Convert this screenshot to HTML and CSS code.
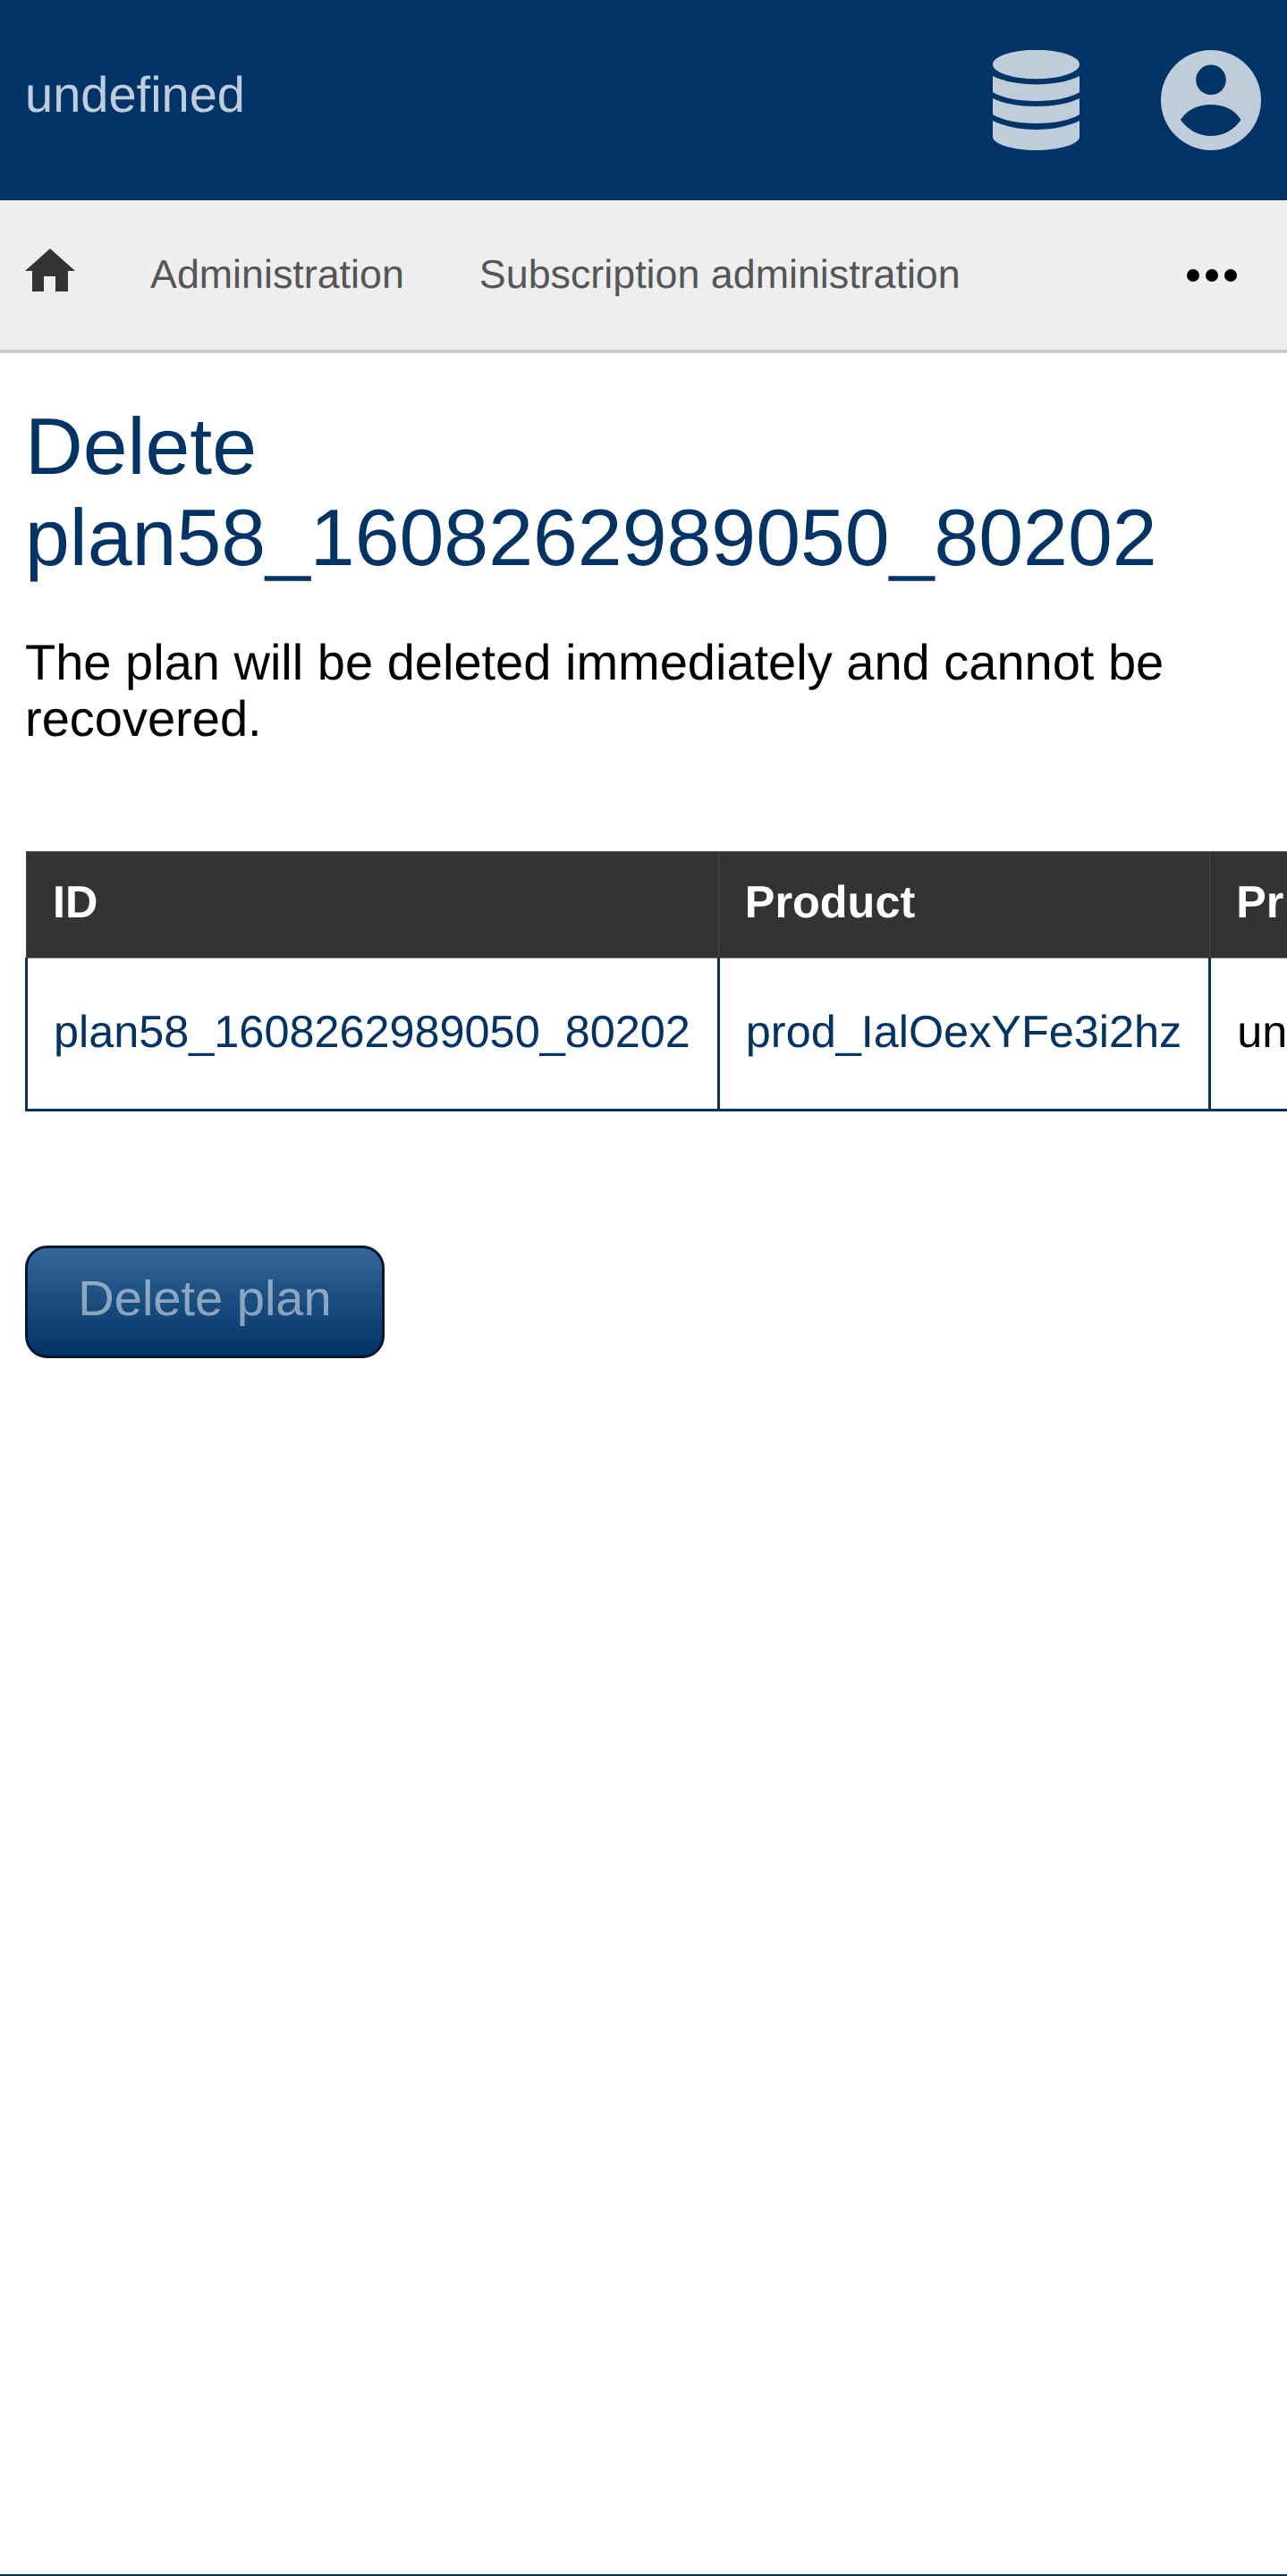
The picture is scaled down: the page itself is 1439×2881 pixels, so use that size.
FILE: index.html
```html
<!DOCTYPE html>
<html lang="en">
<head>
<meta charset="utf-8">
<title>Delete plan</title>
<link rel="stylesheet" href="styles.css">
</head>
<body>
<header class="topbar">
  <span class="brand">undefined</span>
  <div class="top-icons">
    <svg class="icon-db" viewBox="0 0 97 112" width="97" height="112" aria-hidden="true">
      <ellipse cx="48.5" cy="16" rx="48.5" ry="16.3"/>
      <path d="M0 29C12 35 30 38.500 48.500 38.500S85 35 97 29V47C88 53 70 57 48.500 57S9 53 0 47Z"/>
      <path d="M0 54C12 60 30 63 48.500 63S85 60 97 54V72C88 78 70 82 48.500 82S9 78 0 72Z"/>
      <path d="M0 79C12 85 30 89 48.500 89S85 85 97 79V97C97 105 75 112 48.500 112S0 105 0 97Z"/>
    </svg>
    <svg class="icon-user" viewBox="0 0 112 112" width="112" height="112" aria-hidden="true">
      <path fill-rule="evenodd" d="M56 0a56 56 0 1 0 0 112a56 56 0 1 0 0-112ZM56 16.500a16.800 16.800 0 1 1 0 33.600a16.800 16.800 0 1 1 0-33.600ZM22 78C30 66 42 61 56 61S82 66 89.500 78C82 89 70 96 56 96S30 89 22 78Z"/>
    </svg>
  </div>
</header>
<nav class="navbar">
  <svg class="icon-home" viewBox="0 0 56 48" width="56" height="48" aria-hidden="true">
    <path d="M28 0L56 25H48V48H34V31H21V48H8V25H0Z"/>
  </svg>
  <a class="nav-link" href="#">Administration</a>
  <a class="nav-link" href="#">Subscription administration</a>
  <svg class="icon-more" viewBox="0 0 56 14" width="56" height="14" aria-hidden="true">
    <circle cx="7" cy="7" r="7"/><circle cx="28" cy="7" r="7"/><circle cx="49" cy="7" r="7"/>
  </svg>
</nav>
<main class="content">
  <h1 class="title">Delete plan58_1608262989050_80202</h1>
  <p class="lead">The plan will be deleted immediately and cannot be recovered.</p>
  <div class="table-wrap">
    <table class="plans">
      <thead>
        <tr><th>ID</th><th>Product</th><th>Price</th></tr>
      </thead>
      <tbody>
        <tr>
          <td><a href="#">plan58_1608262989050_80202</a></td>
          <td><a href="#">prod_IalOexYFe3i2hz</a></td>
          <td>undefined</td>
        </tr>
      </tbody>
    </table>
  </div>
  <button class="btn" type="button">Delete plan</button>
</main>
<footer class="footer"></footer>
</body>
</html>
```
FILE: styles.css
```css
* { box-sizing: border-box; }
html, body { margin: 0; padding: 0; }
body {
  width: 1439px;
  height: 2881px;
  overflow: hidden;
  display: flex;
  flex-direction: column;
  background: #fff;
  color: #000;
  font-family: "Liberation Sans", Arial, sans-serif;
  font-size: 44.8px;
  text-rendering: geometricPrecision;
}
.topbar {
  height: 224px;
  flex: none;
  background: #003366;
  display: flex;
  align-items: center;
  justify-content: space-between;
  padding: 0 29px 0 28px;
}
.brand { font-size: 56px; color: #bfccd9; position: relative; top: -7px; }
.top-icons { display: flex; align-items: center; gap: 91px; }
.top-icons svg { display: block; fill: #bfccd9; }
.navbar {
  height: 171px;
  flex: none;
  background: #eeeeee;
  border-bottom: 4px solid #cccccc;
  display: flex;
  align-items: center;
  padding: 0 56px 0 28px;
}
.icon-home { fill: #333; flex: none; margin: -12px 84px 0 0; }
.nav-link { color: #555; text-decoration: none; margin-right: 84px; }
.icon-more { fill: #000; margin-left: auto; flex: none; }
.content { flex: 1; padding: 53px 0 0 28px; }
.title {
  margin: 0 29px 0 0;
  color: #003366;
  font-size: 89.6px;
  font-weight: 400;
  line-height: 102px;
}
.lead {
  margin: 57px 29px 0 0;
  font-size: 56px;
  line-height: 63px;
}
.table-wrap { margin-top: 117px; overflow: hidden; }
.plans { border-collapse: collapse; font-size: 50.4px; white-space: nowrap; }
.plans th {
  background: #333;
  color: #fff;
  text-align: left;
  font-weight: 700;
  height: 119px;
  padding: 0 30px 7px 29px;
  border: 1px solid #444;
  border-bottom-color: #888;
}
.plans td {
  height: 170px;
  padding: 0 30px 6px 29px;
  border: 3px solid #003366;
  border-top: 0;
}
.plans a { color: #003366; text-decoration: none; }
.btn {
  display: block;
  margin-top: 150px;
  width: 402px;
  height: 126px;
  border: 3px solid #00152f;
  border-radius: 25px;
  background: linear-gradient(#336699, #003366);
  color: rgba(255, 255, 255, 0.5);
  font: inherit;
  font-size: 56px;
  padding: 0 0 10px;
}
.footer { height: 2px; flex: none; background: #003366; }
```
